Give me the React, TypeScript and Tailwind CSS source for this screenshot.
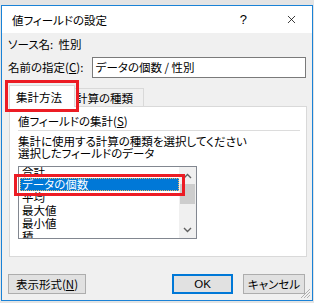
import { X } from 'lucide-react'

const items = ['合計', 'データの個数', '平均', '最大値', '最小値', '積']

const jp = "font-['MS_UI_Gothic','Noto_Sans_CJK_JP',sans-serif] [font-feature-settings:'palt']"

function Chevron({ up }: { up?: boolean }) {
  return (
    <svg width="9" height="6" viewBox="0 0 9 6" className="block">
      <path
        d={up ? 'M1 5 L4.5 1.5 L8 5' : 'M1 1 L4.5 4.5 L8 1'}
        fill="none"
        stroke="#606060"
        strokeWidth="1.4"
      />
    </svg>
  )
}

export default function App() {
  return (
    <div className={`w-[314px] h-[303px] overflow-hidden bg-[#e4e4e4] pt-[5px] pl-[1px] text-[11.5px] text-black ${jp}`}>
      <div className="relative w-[312px] h-[296px] border border-[#1a82d6] bg-[#f0f0f0] flex flex-col">
        {/* Title bar */}
        <div className="h-[27px] bg-white flex items-center pl-[10px] shrink-0">
          <span className="leading-[14px] text-[11.5px]">値フィールドの設定</span>
          <span className="ml-auto mr-[38px] text-[13px] font-['Liberation_Sans',sans-serif]">?</span>
          <X className="w-[13px] h-[13px] mr-[14px]" strokeWidth={1.4} />
        </div>

        <div className="flex flex-col px-[6px] pt-[4px]">
          <div className="leading-[15px] h-[15px]">ソース名:&nbsp;&nbsp;性別</div>

          <div className="flex items-center mt-[5px] h-[21px]">
            <span className="w-[84px] leading-[15px]">名前の指定(<span className="underline">C</span>):</span>
            <div className="w-[215px] h-[21px] border border-[#7a7a7a] bg-white pl-[3px] flex items-center leading-[15px]">
              データの個数 / 性別
            </div>
          </div>

          {/* Tabs */}
          <div className="relative flex items-end mt-[7px] h-[21px] pl-[1px]">
            <div className="w-[66px] h-[22px] border border-b-0 border-[#d9d9d9] bg-white z-10 flex items-center pl-[6px] leading-[14px] -mb-[1px]">
              集計方法
            </div>
            <div className="w-[69px] h-[18px] border border-l-0 border-b-0 border-[#d9d9d9] bg-[#f0f0f0] flex items-center pl-[1px] leading-[14px]">
              計算の種類
            </div>
            <div className="absolute -left-[3px] -top-[5px] w-[74px] h-[32px] border-[3px] border-[#ec1c24] z-20" />
          </div>

          {/* Panel */}
          <div className="ml-[1px] w-[298px] h-[151px] border border-[#d9d9d9] bg-white px-[8px] pt-[7px]">
            <div className="leading-[15px]">値フィールドの集計(<span className="underline">S</span>)</div>
            <div className="mt-[1px] h-px w-[282px] bg-[#dcdcdc]" />
            <div className="mt-[4px] leading-[12px]">集計に使用する計算の種類を選択してください</div>
            <div className="leading-[12px]">選択したフィールドのデータ</div>

            <div className="relative mt-[7px] w-[179px] h-[73px] border border-[#828790] flex">
              <div className="flex-1 overflow-hidden">
                <div className="-mt-[2px] flex flex-col pl-[1px]">
                  {items.map((it, i) => (
                    <div
                      key={it}
                      className={
                        i === 1
                          ? 'h-[13px] leading-[13px] pl-[2px] bg-[#0078d7] text-white outline-1 outline-dotted outline-[#f2b25a] -outline-offset-1'
                          : 'h-[13px] leading-[13px] pl-[2px]'
                      }
                    >
                      {it}
                    </div>
                  ))}
                </div>
              </div>
              <div className="w-[17px] bg-[#f0f0f0] flex flex-col items-center">
                <div className="h-[17px] flex items-center justify-center">
                  <Chevron up />
                </div>
                <div className="w-[15px] h-[20px] bg-[#cdcdcd]" />
                <div className="mt-auto h-[17px] flex items-center justify-center">
                  <Chevron />
                </div>
              </div>
              <div className="absolute -left-[5px] top-[7px] w-[171px] h-[22px] border-[3px] border-[#ec1c24]" />
            </div>
          </div>

          {/* Buttons */}
          <div className="flex mt-[17px] h-[20px]">
            <button className="w-[78px] h-[20px] border border-[#adadad] bg-[#e1e1e1] flex items-center justify-center leading-[14px]">
              表示形式(<span className="underline">N</span>)
            </button>
            <button className="ml-auto w-[61px] h-[20px] border-2 border-[#0078d7] bg-[#e1e1e1] flex items-center justify-center leading-[14px] font-['Liberation_Sans',sans-serif]">
              OK
            </button>
            <button className="ml-[10px] mr-[1px] w-[62px] h-[20px] border border-[#adadad] bg-[#e1e1e1] flex items-center justify-center leading-[14px]">
              キャンセル
            </button>
          </div>
        </div>

        <svg width="10" height="10" viewBox="0 0 10 10" className="absolute right-[1px] bottom-[1px]">
          <path d="M9 3 L3 9 M9 6 L6 9 M9 0 L0 9" stroke="#b0b0b0" strokeWidth="1" />
        </svg>
      </div>
    </div>
  )
}
